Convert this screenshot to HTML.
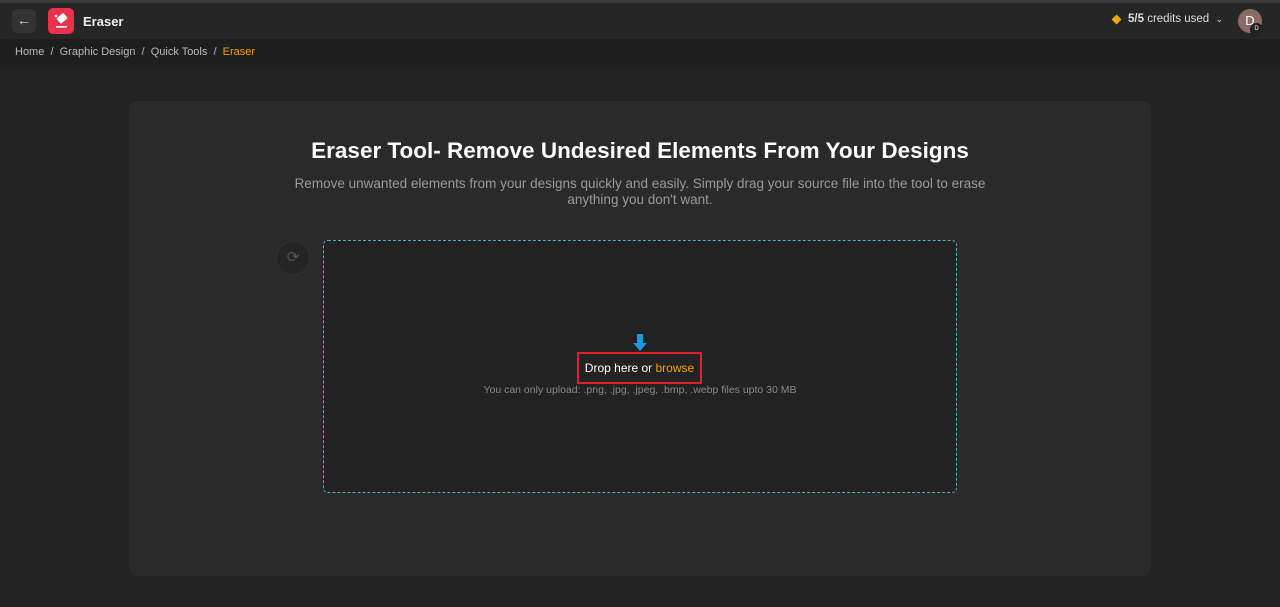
<!DOCTYPE html>
<html><head><style>
*{box-sizing:border-box;margin:0;padding:0}
body{width:1280px;height:607px;background:#222222;font-family:"Liberation Sans",sans-serif;overflow:hidden;position:relative;color:#fff}
.top{position:absolute;top:0;left:0;width:1280px;height:3px;background:#3a3a3a}
.hdr{position:absolute;top:3px;left:0;width:1280px;height:36px;background:#262626}
.bc{position:absolute;top:39px;left:0;width:1280px;height:26px;background:#1e1e1e;font-size:11px;color:#bbb;padding:7px 0 0 15px}
.card{position:absolute;left:129px;top:101px;width:1022px;height:475px;background:#2a2a2a;border-radius:8px}
</style></head><body>
<div class="top"></div>
<div class="hdr">
 <div style="position:absolute;left:12px;top:6px;width:24px;height:24px;background:#333;border-radius:5px;color:#ddd;font-size:14px;text-align:center;line-height:23px">&#8592;</div>
 <div style="position:absolute;left:48px;top:5px;width:26px;height:26px;background:#e8334a;border-radius:5px">
  <svg width="26" height="26" viewBox="0 0 26 26"><rect x="10" y="7" width="9" height="7" rx="1" fill="#fff" transform="rotate(-40 14 11)"/><rect x="8" y="18" width="11" height="1.6" fill="#fff"/><circle cx="8" cy="8" r="1.3" fill="#fff"/></svg>
 </div>
 <div style="position:absolute;left:83px;top:11px;font-size:13px;font-weight:bold;color:#eee">Eraser</div>
 <div style="position:absolute;left:1113px;top:13px;width:7px;height:7px;background:#f5a800;transform:rotate(45deg)"></div>
 <div style="position:absolute;left:1128px;top:10px;font-size:11.5px;color:#ddd"><b>5/5</b> credits used &nbsp;<span style="font-size:9px">&#8964;</span></div>
 <div style="position:absolute;left:1238px;top:6px;width:24px;height:24px;border-radius:50%;background:#8a6a64;color:#fff;font-size:13px;text-align:center;line-height:24px">D</div>
 <div style="position:absolute;left:1250px;top:20px;width:13px;height:13px;border-radius:50%;background:#222;color:#fff;font-size:6px;text-align:center;line-height:13px">D</div>
</div>
<div class="bc">Home &nbsp;/&nbsp; Graphic Design &nbsp;/&nbsp; Quick Tools &nbsp;/&nbsp; <span style="color:#f5a000">Eraser</span></div>
<div class="card">
 <div style="position:absolute;top:37px;width:100%;text-align:center;font-size:22.5px;font-weight:bold;color:#fff">Eraser Tool- Remove Undesired Elements From Your Designs</div>
 <div style="position:absolute;top:75px;left:148px;width:726px;text-align:center;font-size:13.5px;line-height:16px;color:#9a9a9a">Remove unwanted elements from your designs quickly and easily. Simply drag your source file into the tool to erase anything you don't want.</div>
 <div style="position:absolute;left:146px;top:139px;width:36px;height:36px;border-radius:50%;background:#252525;border:2px solid #2e2e2e;color:#555;font-size:15px;text-align:center;line-height:31px">&#10227;</div>
 <div style="position:absolute;left:194px;top:139px;width:634px;height:253px;border:1px dashed #4bb3cc;border-radius:5px;background:#222"></div>
 <div style="position:absolute;left:504px;top:233px;width:14px;height:18px">
  <svg width="14" height="18"><rect x="4" y="0" width="6" height="9" fill="#1a9be0"/><polygon points="0,9 14,9 7,17" fill="#1a9be0"/></svg>
 </div>
 <div style="position:absolute;left:448px;top:251px;width:125px;height:32px;border:2px solid #e0202a;font-size:12px;text-align:center;line-height:28px;color:#fff">Drop here or <span style="color:#f5a000">browse</span></div>
 <div style="position:absolute;top:283px;width:1022px;text-align:center;font-size:10.5px;color:#8a8a8a">You can only upload: .png, .jpg, .jpeg, .bmp, .webp files upto 30 MB</div>
</div>
</body></html>
